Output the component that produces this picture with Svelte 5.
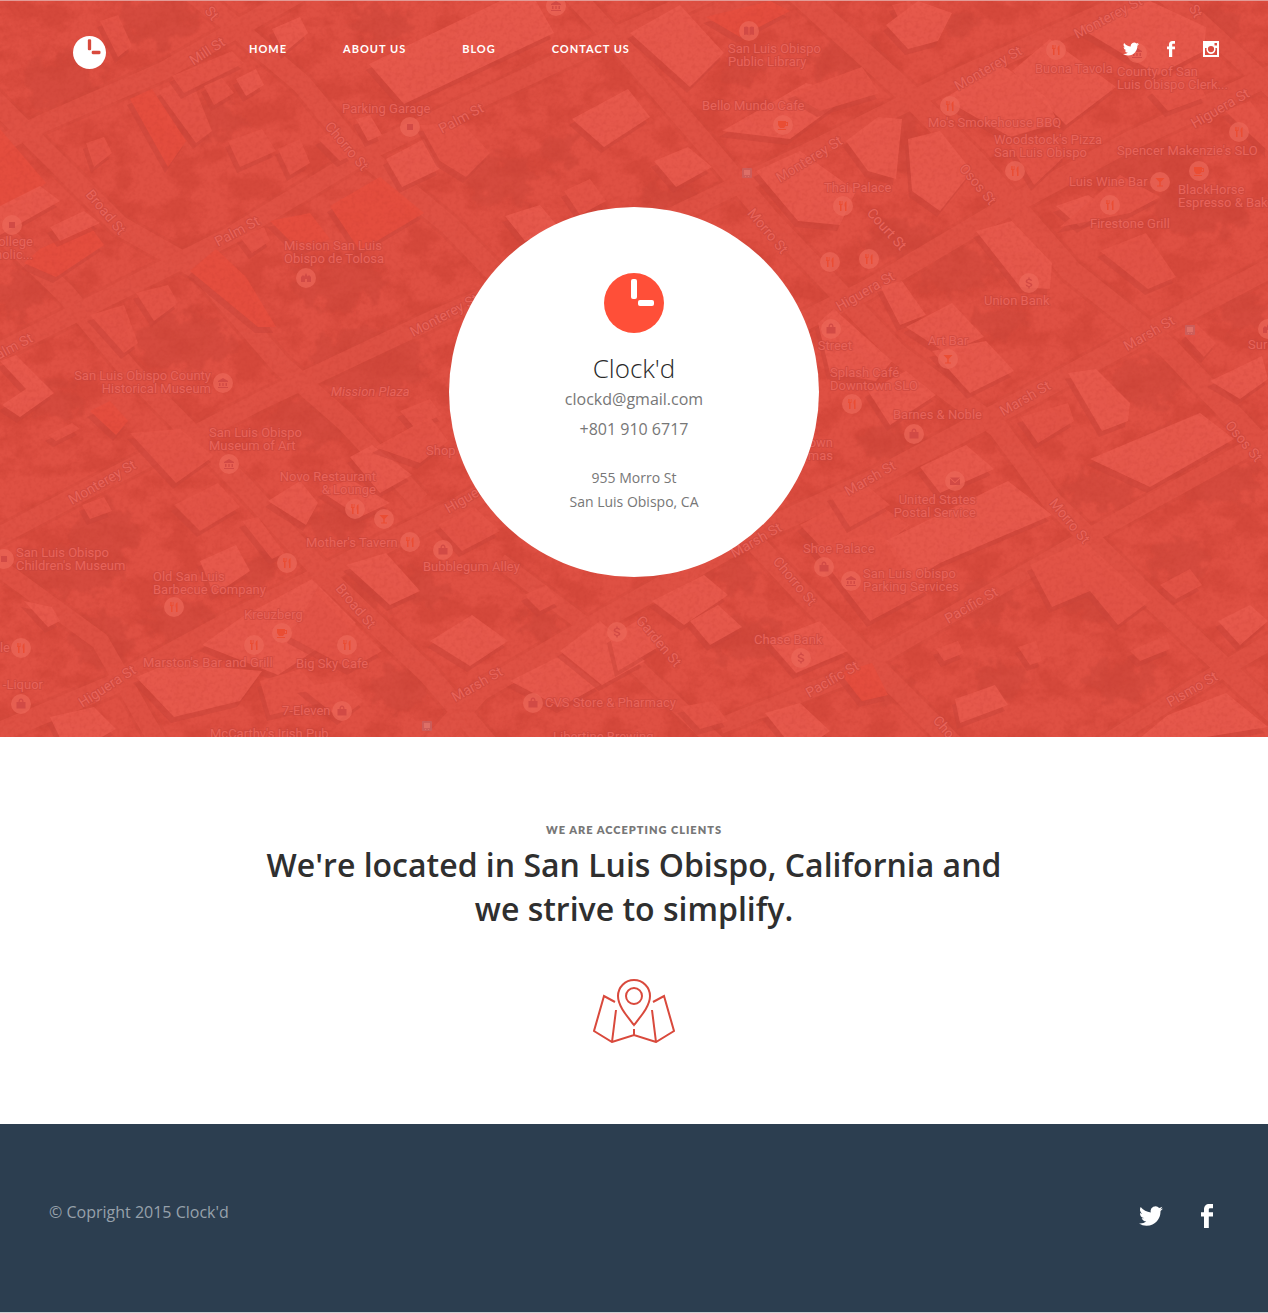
<script>
  const nav = ['Home', 'About us', 'Blog', 'Contact us'];

  // Streets: [width, points]
  const streets = [
    [20, '-10,95 60,165 120,225 200,270 280,363 345,420 420,500'],
    [20, '-10,220 65,292 130,370 245,487 330,580 428,673 490,745'],
    [20, '190,-10 228,20 302,83 351,143 450,225 600,380 735,520 800,590 955,745'],
    [20, '570,-10 628,53 697,133 771,220 898,353 998,427 1052,500 1150,597 1280,718'],
    [22, '795,-10 905,90 975,160 1016,207 1071,270 1168,347 1238,420 1280,465'],
    [18, '1160,-10 1199,20 1280,95'],
    [18, '-10,560 100,640 160,745'],
    [16, '500,560 620,650 720,745'],
    [18, '-10,148 41,123 163,70 228,33 300,-8'],
    [18, '-10,355 110,295 230,235 375,147 571,55 710,-8'],
    [18, '-10,540 100,482 260,400 440,315 620,240 810,150 960,75 1110,8 1150,-10'],
    [20, '-10,735 110,685 230,620 460,505 660,390 865,290 1000,210 1130,140 1280,70'],
    [20, '430,745 480,690 600,620 760,530 870,480 1030,395 1150,330 1280,262'],
    [16, '720,725 840,678 975,600 1080,540 1280,430'],
    [16, '1100,745 1190,688 1280,635']
  ];

  // Roofs: [tone, points]; tone 0 is the palest, 2 the most saturated
  const roofs = [
    [0, '369,63 500,0 536,0 554,32 404,103'],
    [1, '158,90 190,75 212,130 196,142'], [1, '100,20 118,14 132,45 118,56'],
    [0, '272,28 300,16 308,32 284,52'], [1, '172,75 232,50 244,62 184,92'],
    [0, '236,78 256,68 264,84 246,95'], [2, '130,98 152,88 186,140 168,166'],
    [1, '204,85 222,77 234,92 214,104'], [1, '86,142 104,136 112,152 94,166'],
    [1, '228,140 262,128 276,150 240,166'], [1, '278,148 300,138 310,162 290,174'],
    [0, '356,118 370,114 382,134 368,140'], [1, '318,138 334,130 352,154 340,160'],
    [0, '386,158 424,138 440,168 402,186'], [1, '420,124 462,122 490,152 466,176 440,160'],
    [2, '330,205 380,176 424,212 360,250'], [0, '572,118 628,88 650,116 604,146'],
    [1, '564,190 590,178 606,200 580,214'], [0, '505,215 540,204 560,228 525,240'],
    [2, '0,128 46,182 20,202 0,205'], [0, '0,205 40,185 60,200 0,234'],
    [2, '40,248 90,225 104,244 56,276 24,262'], [0, '50,226 84,210 100,222 60,240'],
    [2, '190,270 216,248 246,276 276,326 258,326'], [2, '270,220 310,212 330,238 300,250'],
    [1, '90,314 124,304 138,342 124,352'], [1, '136,292 168,284 178,302 154,320'],
    [1, '240,236 264,226 270,240 252,252'], [0, '0,360 16,354 54,392 20,416 2,404 26,388'],
    [2, '90,410 110,400 128,420 116,434'], [1, '48,434 72,422 80,428 56,440'],
    [1, '130,432 180,428 214,455 176,482'], [0, '350,456 372,444 412,474 380,492'],
    [1, '400,410 430,398 442,414 414,426'], [1, '375,446 430,416 448,440 420,462'],
    [1, '82,504 104,496 112,510 90,518'], [1, '174,504 218,482 240,506 200,530'],
    [0, '200,560 236,544 250,570 214,594'], [1, '242,520 258,516 284,552 272,558'],
    [0, '268,500 300,480 318,502 306,524'], [0, '320,490 350,478 390,502 360,516'],
    [1, '438,524 474,506 500,530 462,550'], [0, '346,564 386,552 420,590 390,604'],
    [0, '242,616 312,578 356,622 278,674 202,644'], [1, '318,586 354,622 382,650 350,668 290,636'],
    [0, '136,676 170,662 262,670 240,700 174,716'], [1, '260,680 300,668 330,700 270,714'],
    [0, '50,716 94,706 116,728 100,737 60,737'], [0, '24,600 52,606 60,620 48,626'],
    [0, '430,640 472,614 508,640 470,665'], [1, '524,594 546,584 560,600 540,610'],
    [0, '510,680 562,654 600,684 560,706'], [0, '560,650 600,620 645,660 602,684'],
    [1, '300,686 340,680 364,700 340,718'], [0, '652,600 704,574 728,594 684,624'],
    [0, '690,620 718,604 742,626 710,644'], [0, '610,636 640,618 660,645 618,670'],
    [0, '768,640 820,620 848,650 796,672'], [1, '680,706 712,700 728,720 700,728'],
    [0, '765,712 800,702 830,730 820,737 785,737'], [2, '840,672 872,662 888,694 862,700'],
    [0, '955,698 995,684 1008,704 960,722'], [1, '800,524 860,492 910,524 870,555 820,545'],
    [1, '830,494 866,484 890,504 850,526'], [0, '885,540 1008,480 1052,514 940,562 910,580'],
    [1, '812,545 880,532 930,588 870,620'], [1, '1030,564 1084,540 1150,600 1118,624 1090,590 1052,606'],
    [1, '936,648 958,640 964,652 944,660'], [1, '1018,646 1036,640 1042,660 1030,664'],
    [1, '1130,650 1166,634 1170,648 1140,660'], [0, '1168,714 1226,692 1268,726 1200,737 1140,737'],
    [0, '1218,620 1250,604 1268,620 1240,644'], [1, '1160,584 1190,568 1202,584 1176,598'],
    [1, '892,4 910,0 918,12 900,20'], [0, '630,32 680,4 724,52 690,86'],
    [2, '706,16 770,0 790,10 740,36'], [0, '886,24 918,0 952,12 938,40 908,48'],
    [0, '1078,26 1150,0 1206,26 1204,50 1158,74'], [0, '1012,70 1050,38 1116,86 1066,124'],
    [0, '944,98 1000,62 1046,96 1058,122 1010,136'], [0, '722,130 806,82 850,94 790,138'],
    [1, '790,92 862,66 880,92 820,110'], [0, '846,140 878,116 902,118 896,178 868,170'],
    [0, '908,138 940,130 972,170 940,210 912,190'], [0, '756,170 800,150 856,190 840,224 798,220'],
    [0, '654,160 688,146 712,166 676,186'], [1, '1010,144 1054,136 1066,154 1034,184'],
    [0, '976,230 1012,220 1052,262 1050,288 1020,286'], [1, '1100,250 1146,232 1176,276 1148,288'],
    [0, '1056,205 1088,194 1110,208 1080,226'], [0, '880,285 902,280 926,314 900,324'],
    [0, '906,326 952,302 984,336 946,352'], [0, '932,350 986,340 1014,370 970,392'],
    [0, '818,322 834,308 892,360 876,380 830,372'], [0, '868,390 906,370 936,394 890,424'],
    [0, '1068,372 1096,368 1130,402 1128,420 1102,430'], [1, '1020,416 1068,402 1074,420 1038,442'],
    [0, '1090,458 1128,442 1200,412 1234,438 1150,486'], [0, '1210,380 1262,355 1268,378 1240,398'],
    [0, '920,466 966,444 994,468 940,492'], [1, '1184,334 1196,322 1216,342 1204,356'],
    [1, '1150,90 1190,62 1206,96 1168,110'], [1, '1060,226 1120,174 1160,196 1130,212'],
    [1, '1225,110 1250,100 1268,124 1268,150']
  ];

  // Tree canopy: [cx, cy, rx, ry]
  const trees = [
    [210, 118, 32, 20], [60, 80, 40, 26], [160, 20, 40, 22], [380, 24, 34, 16], [500, 180, 34, 24],
    [340, 280, 46, 26], [370, 360, 60, 34], [180, 340, 50, 28], [20, 290, 28, 22], [310, 420, 46, 22],
    [60, 400, 26, 18], [105, 530, 34, 30], [70, 570, 50, 24], [100, 640, 32, 28], [180, 620, 36, 20],
    [398, 688, 30, 22], [340, 520, 34, 18], [262, 570, 18, 16], [400, 590, 50, 20], [540, 625, 24, 14],
    [735, 570, 26, 18], [745, 640, 34, 22], [890, 690, 24, 16], [985, 600, 30, 22], [1090, 600, 26, 18],
    [1180, 560, 30, 24], [1120, 680, 34, 22], [1000, 680, 24, 20], [880, 590, 34, 16], [905, 140, 16, 36],
    [740, 70, 20, 14], [850, 60, 40, 20], [960, 20, 16, 14], [1150, 170, 60, 28], [1200, 210, 50, 24],
    [1150, 380, 36, 26], [1160, 440, 22, 14], [1000, 320, 26, 18], [890, 440, 34, 16], [960, 370, 20, 14],
    [1220, 480, 44, 22], [1100, 490, 40, 18], [900, 240, 40, 20], [1240, 310, 26, 18], [960, 270, 40, 22],
    [1210, 20, 30, 14], [560, 150, 20, 18], [670, 200, 30, 16], [760, 110, 18, 12]
  ];

  // Place names: [x, y, anchor, lines]
  const places = [
    [728, 52, 'start', ['San Luis Obispo', 'Public Library']],
    [342, 112, 'start', ['Parking Garage']],
    [702, 109, 'start', ['Bello Mundo Cafe']],
    [1035, 72, 'start', ['Buona Tavola']],
    [1117, 75, 'start', ['County of San', 'Luis Obispo Clerk...']],
    [928, 126, 'start', ["Mo's Smokehouse BBQ"]],
    [994, 143, 'start', ["Woodstock's Pizza", 'San Luis Obispo']],
    [1117, 154, 'start', ["Spencer Makenzie's SLO"]],
    [1069, 185, 'start', ['Luis Wine Bar']],
    [1178, 193, 'start', ['BlackHorse', 'Espresso & Bak']],
    [1090, 227, 'start', ['Firestone Grill']],
    [824, 191, 'start', ['Thai Palace']],
    [33, 245, 'end', ['ollege', 'holic...']],
    [284, 249, 'start', ['Mission San Luis', 'Obispo de Tolosa']],
    [211, 379, 'end', ['San Luis Obispo County', 'Historical Museum']],
    [209, 436, 'start', ['San Luis Obispo', 'Museum of Art']],
    [376, 480, 'end', ['Novo Restaurant', '& Lounge']],
    [426, 454, 'start', ['Shop']],
    [984, 304, 'start', ['Union Bank']],
    [928, 344, 'start', ['Art Bar']],
    [852, 349, 'end', ['Street']],
    [1248, 348, 'start', ['Sur']],
    [830, 376, 'start', ['Splash Café', 'Downtown SLO']],
    [893, 418, 'start', ['Barnes & Noble']],
    [833, 446, 'end', ['own', 'mas']],
    [976, 503, 'end', ['United States', 'Postal Service']],
    [803, 552, 'start', ['Shoe Palace']],
    [863, 577, 'start', ['San Luis Obispo', 'Parking Services']],
    [16, 556, 'start', ['San Luis Obispo', "Children's Museum"]],
    [306, 546, 'start', ["Mother's Tavern"]],
    [423, 570, 'start', ['Bubblegum Alley']],
    [153, 580, 'start', ['Old San Luis', 'Barbecue Company']],
    [244, 618, 'start', ['Kreuzberg']],
    [143, 666, 'start', ["Marston's Bar and Grill"]],
    [296, 667, 'start', ['Big Sky Cafe']],
    [43, 688, 'end', ['-Liquor']],
    [10, 651, 'end', ['le']],
    [282, 714, 'start', ['7-Eleven']],
    [210, 737, 'start', ["McCarthy's Irish Pub"]],
    [545, 706, 'start', ['CVS Store & Pharmacy']],
    [553, 740, 'start', ['Libertine Brewing']],
    [754, 643, 'start', ['Chase Bank']]
  ];

  // Street names: [centre x, centre y, angle, name]
  const streetNames = [
    [207, 50, -33, 'Mill St'], [212, 12, 50, 'St'], [347, 145, 50, 'Chorro St'], [461, 117, -28, 'Palm St'],
    [106, 211, 50, 'Broad St'], [237, 230, -28, 'Palm St'], [14, 345, -28, 'alm St'],
    [1108, 16, -28, 'Monterey St'], [988, 67, -30, 'Monterey St'], [809, 158, -32, 'Monterey St'],
    [444, 314, -28, 'Monterey St'], [102, 481, -30, 'Monterey St'], [1220, 107, -30, 'Higuera St'],
    [865, 290, -30, 'Higuera St'], [474, 492, -30, 'Higuera St'], [107, 685, -33, 'Higuera St'],
    [978, 183, 50, 'Osos St'], [1244, 440, 50, 'Osos St'], [1196, 10, 60, 'St'],
    [768, 230, 50, 'Morro St'], [1070, 520, 50, 'Morro St'], [887, 228, 48, 'Court St'],
    [1149, 332, -30, 'Marsh St'], [1025, 397, -30, 'Marsh St'], [870, 477, -30, 'Marsh St'],
    [756, 539, -30, 'Marsh St'], [477, 683, -30, 'Marsh St'], [356, 605, 50, 'Broad St'],
    [795, 580, 50, 'Chorro St'], [659, 640, 50, 'Garden St'], [971, 604, -30, 'Pacific St'],
    [832, 678, -30, 'Pacific St'], [1192, 688, -30, 'Pismo St'], [944, 726, 50, 'Cho']
  ];

  // Pins: [x, y, kind]
  const pins = [
    [410, 126, 'square'], [749, 30, 'book'], [783, 124, 'cup'], [950, 105, 'fork'], [1056, 49, 'fork'],
    [1137, 52, 'bank'], [1239, 131, 'fork'], [1199, 170, 'cup'], [1160, 181, 'wine'], [1110, 204, 'fork'],
    [1015, 170, 'fork'], [843, 205, 'fork'], [830, 261, 'fork'], [869, 258, 'fork'], [306, 277, 'house'],
    [12, 224, 'square'], [223, 382, 'bank'], [229, 463, 'bank'], [355, 508, 'fork'], [384, 518, 'wine'],
    [410, 541, 'fork'], [443, 549, 'bag'], [287, 562, 'fork'], [174, 606, 'fork'], [282, 632, 'cup'],
    [254, 644, 'fork'], [347, 644, 'fork'], [21, 647, 'fork'], [21, 703, 'bag'], [342, 710, 'bag'],
    [533, 702, 'bag'], [617, 631, 'dollar'], [801, 657, 'dollar'], [1029, 282, 'dollar'],
    [831, 328, 'bag'], [948, 358, 'wine'], [852, 403, 'fork'], [914, 433, 'bag'], [955, 480, 'mail'],
    [824, 566, 'bag'], [851, 580, 'bank'], [4, 558, 'square'], [1268, 328, 'house'], [556, 5, 'bank']
  ];
  const stops = [[747, 172], [1190, 329], [427, 725]];

  const glyphs = {
    fork: 'M-4-5v4h1v6h1.500v-6h1v-4h-.7v3h-.7v-3h-.7v3h-.7v-3zM2-5v10h1.500v-10q-3 2-1.500 6z',
    cup: 'M-5-4H3v1h2v4H2.500L1 3h-4l-2-3zM3-2v2h1v-2zM-5 4h8v1h-8z',
    wine: 'M-4.500-4h9L.7 0v3.500H3v1h-6v-1h2.300V0z',
    bag: 'M-4.500-2h2q0-3.500 2.500-3.500T2.500-2h2v6.500h-9zM-1.300-2h2.600q0-2.200-1.300-2.200T-1.300-2z',
    square: 'M-3-3h6v6h-6z',
    book: 'M-5-4q3-1 4.500.5v8Q-2 3-5 4zM5-4q-3-1-4.500.5v8Q2 3 5 4z',
    bank: 'M-5-2L0-5l5 3v1H-5zM-4 0h1.500v3H-4zM-.7 0H.7v3H-.7zM2.500 0H4v3H2.500zM-5 4H5v1H-5z',
    house: 'M-5 4v-5l2-2 1.300 1.500L0-5l1.700 3.500L3-3l2 2v5H1V1h-2v3z',
    mail: 'M-5-3.500H5L0 1zM-5-2.300L0 2.200 5-2.300V4H-5z',
    dollar: 'M-.7-5.500H.7v1.300q2.200.3 2.600 2H1.700Q1.200-3 0-3-1.800-3-1.800-1.800-1.800-.9.200-.5 3.400.2 3.400 2.100 3.400 3.700.7 4.100v1.400H-.7V4.100Q-3.200 3.700-3.400 1.700h1.600Q-1.500 2.900 0 2.900q1.700 0 1.700-.9 0-.8-2-1.200-3.100-.6-3.100-2.500 0-1.900 2.700-2.400z'
  };
  const warm = ['fork', 'cup', 'wine'];
</script>

{#snippet clock()}
  <svg class="clock" viewBox="0 0 60 60" role="img" aria-label="Clock'd">
    <circle cx="30" cy="30" r="30" />
    <rect x="27" y="6" width="6" height="20" rx="2" />
    <rect x="34" y="27" width="16" height="6" rx="2" />
  </svg>
{/snippet}

{#snippet twitter()}
  <svg class="icon" viewBox="0 0 24 24" aria-hidden="true">
    <path d="M24 4.600a10 10 0 0 1-2.800.8 5 5 0 0 0 2.100-2.700 10 10 0 0 1-3.100 1.200 4.900 4.900 0 0 0-8.400 4.500A14 14 0 0 1 1.700 3.100a4.900 4.900 0 0 0 1.500 6.600 5 5 0 0 1-2.200-.6v.1a4.900 4.900 0 0 0 3.900 4.800 5 5 0 0 1-2.200.1 4.900 4.900 0 0 0 4.600 3.400A9.900 9.900 0 0 1 0 19.500 14 14 0 0 0 7.500 21.700c9.100 0 14-7.500 14-14v-.6A10 10 0 0 0 24 4.600z" />
  </svg>
{/snippet}

{#snippet facebook()}
  <svg class="icon" viewBox="0 0 24 24" aria-hidden="true">
    <path d="M9 24V12.500H6V8.300h3V5.500C9 2 11 0 14.200 0H18v4.200h-2.700c-1.200 0-1.500.6-1.500 1.600v2.500H18v4.200h-4.200V24z" />
  </svg>
{/snippet}

<div class="page">
  <div class="hero">
    <svg class="map" viewBox="0 0 1268 736" preserveAspectRatio="xMidYMid slice" aria-hidden="true">
      <defs>
        <filter id="foliage" x="0" y="0" width="100%" height="100%" color-interpolation-filters="sRGB">
          <feTurbulence type="fractalNoise" baseFrequency="0.030 0.040" numOctaves="6" seed="8" />
          <feColorMatrix values="0 0 0 0 0.78  0 0 0 0 0.24  0 0 0 0 0.19  4 0 0 0 -1.700" />
        </filter>
        <filter id="grain" x="0" y="0" width="100%" height="100%" color-interpolation-filters="sRGB">
          <feTurbulence type="fractalNoise" baseFrequency="0.250" numOctaves="2" seed="2" />
          <feColorMatrix values="0 0 0 0 0.75  0 0 0 0 0.22  0 0 0 0 0.18  3 0 0 0 -1.300" />
        </filter>
        <filter id="ragged" x="-10%" y="-10%" width="120%" height="120%" color-interpolation-filters="sRGB">
          <feTurbulence type="fractalNoise" baseFrequency="0.070" numOctaves="4" seed="3" />
          <feDisplacementMap in="SourceGraphic" scale="40" xChannelSelector="R" yChannelSelector="G" />
          <feGaussianBlur stdDeviation="1" />
        </filter>
      </defs>
      <rect class="ground" width="1268" height="736" />
      <rect width="1268" height="736" filter="url(#foliage)" opacity="0.4" />
      <g class="trees" filter="url(#ragged)">
        {#each trees as [cx, cy, rx, ry]}
          <ellipse {cx} {cy} {rx} {ry} />
        {/each}
      </g>
      <g class="kerbs">
        {#each streets as [width, points]}
          <polyline {points} stroke-width={width + 6} />
        {/each}
      </g>
      <g class="streets">
        {#each streets as [width, points]}
          <polyline {points} stroke-width={width} />
        {/each}
      </g>
      {#each roofs as [tone, points]}
        <polygon class="shade" {points} transform="translate(-3 6)" />
        <polygon class="roof tone{tone}" {points} />
      {/each}
      <rect width="1268" height="736" filter="url(#grain)" opacity="0.16" />
      {#each pins as [x, y, kind]}
        <g transform="translate({x} {y})">
          <circle class="pin" r="10" />
          <path class={warm.includes(kind) ? 'glyph warm' : 'glyph'} d={glyphs[kind]} />
        </g>
      {/each}
      {#each stops as [x, y]}
        <g class="stop" transform="translate({x} {y})">
          <rect x="-5" y="-5" width="10" height="10" rx="1" />
          <path d="M-3-3h6v5h-6zM-2 3h1v1h-1zM1 3h1v1H1z" />
        </g>
      {/each}
      <g class="labels">
        {#each places as [x, y, anchor, lines]}
          {#each lines as line, i}
            <text {x} y={y + i * 13} text-anchor={anchor}>{line}</text>
          {/each}
        {/each}
        <text x="331" y="395" font-style="italic">Mission Plaza</text>
      </g>
      <g class="labels road">
        {#each streetNames as [x, y, angle, name]}
          <text transform="translate({x} {y}) rotate({angle})" text-anchor="middle" dy="5">{name}</text>
        {/each}
      </g>
    </svg>

    <header>
      <a class="logo" href="#home" aria-label="Clock'd home">{@render clock()}</a>
      <nav>
        {#each nav as item}
          <a href="#{item.toLowerCase().replace(' ', '-')}">{item}</a>
        {/each}
      </nav>
      <div class="social">
        <a href="#twitter" aria-label="Twitter">{@render twitter()}</a>
        <a href="#facebook" aria-label="Facebook">{@render facebook()}</a>
        <a href="#instagram" aria-label="Instagram">
          <svg class="icon" viewBox="0 0 16 16" aria-hidden="true">
            <path fill-rule="evenodd" d="M0 0h16v16H0zM2 7v7h12V7h-1.600a4.600 4.600 0 1 1-8.800 0zM11.500 2v2.500H14V2zM8 5a3.100 3.100 0 1 0 0 6.200A3.100 3.100 0 0 0 8 5z" />
          </svg>
        </a>
      </div>
    </header>

    <section class="card">
      {@render clock()}
      <h1>Clock'd</h1>
      <a href="mailto:clockd@gmail.com">clockd@gmail.com</a>
      <a href="tel:+8019106717">+801 910 6717</a>
      <address>955 Morro St<br />San Luis Obispo, CA</address>
    </section>
  </div>

  <main>
    <p>We are accepting clients</p>
    <h2>We're located in San Luis Obispo, California and we strive to simplify.</h2>
    <svg class="place" viewBox="0 0 82 64" aria-hidden="true">
      <path d="M41 46C34 37 25 27 25 17a16 16 0 0 1 32 0c0 10-9 20-16 29z" />
      <circle cx="41" cy="17" r="8" />
      <path d="M22 23l-11-6L1 52l18 11 22-7 22 7 18-11-10-35-11 6M23 31l-4 32M59 31l4 32M41 50v6" />
    </svg>
  </main>

  <footer>
    <span>© Copright 2015 Clock'd</span>
    <div class="social">
      <a href="#twitter" aria-label="Twitter">{@render twitter()}</a>
      <a href="#facebook" aria-label="Facebook">{@render facebook()}</a>
    </div>
  </footer>
</div>

<style>
  :global(body) {
    margin: 0;
    background: #fff;
  }
  .page {
    font-family: 'Open Sans', 'Noto Sans', sans-serif;
    color: #777;
    border-bottom: 1px solid #ccd0d3;
  }
  a {
    color: inherit;
    text-decoration: none;
  }
  svg {
    display: block;
  }
  .hero {
    position: relative;
    overflow: hidden;
    border-top: 1px solid #e39a95;
    padding-bottom: 160px;
    background: #dd4f41;
  }
  .map {
    position: absolute;
    inset: 0;
    width: 100%;
    height: 100%;
  }
  .ground {
    fill: #df5043;
  }
  .trees {
    fill: #cd463a;
    opacity: 0.55;
  }
  .kerbs,
  .streets {
    fill: none;
    stroke-linejoin: round;
  }
  .kerbs {
    stroke: #cf483b;
    opacity: 0.3;
  }
  .streets {
    stroke: #e05245;
    opacity: 0.85;
  }
  .shade {
    fill: #c9443a;
    opacity: 0.5;
  }
  .roof {
    opacity: 0.85;
  }
  .tone0 {
    fill: #e95b4e;
  }
  .tone1 {
    fill: #e45548;
  }
  .tone2 {
    fill: #e64d3e;
  }
  .pin {
    fill: #ed6759;
    opacity: 0.7;
  }
  .glyph {
    fill: #d24a45;
  }
  .warm {
    fill: #ea4d34;
  }
  .stop {
    fill: #c9605f;
    opacity: 0.8;
  }
  .stop path {
    fill: #df7770;
  }
  .labels {
    font-family: Roboto, sans-serif;
    font-size: 13px;
    fill: #e8635a;
    stroke: #c9453c;
    stroke-opacity: 0.6;
    stroke-width: 2px;
    stroke-linejoin: round;
    paint-order: stroke;
  }
  .road {
    font-size: 14px;
  }
  header {
    position: relative;
    display: flex;
    align-items: flex-start;
    padding: 35px 49px 0 73px;
    color: #fff;
  }
  .logo .clock {
    width: 33px;
    height: 33px;
    fill: #fff;
  }
  .logo .clock rect {
    fill: #d84a3d;
  }
  nav {
    display: flex;
    flex-wrap: wrap;
    gap: 8px 56px;
    flex: 1;
    padding: 5px 32px 0 143px;
    font-family: Lato, 'Open Sans', sans-serif;
    font-size: 11px;
    line-height: 16px;
    font-weight: 700;
    letter-spacing: 1px;
    text-transform: uppercase;
  }
  .social {
    display: flex;
    gap: 24px;
    color: #fff;
  }
  header .social {
    padding-top: 5px;
  }
  .icon {
    width: 16px;
    height: 16px;
    fill: currentColor;
  }
  .card {
    position: relative;
    box-sizing: border-box;
    width: 370px;
    height: 370px;
    margin: 138px auto 0;
    padding-top: 66px;
    border-radius: 50%;
    background: #fff;
    display: flex;
    flex-direction: column;
    align-items: center;
    font-size: 16px;
    line-height: 30px;
    text-align: center;
  }
  .card .clock {
    width: 60px;
    height: 60px;
    fill: #ff4f38;
  }
  .card .clock rect {
    fill: #fff;
  }
  h1 {
    margin: 19px 0 0;
    font-size: 26px;
    line-height: 32px;
    font-weight: 300;
    color: #292929;
  }
  address {
    margin-top: 22px;
    font-style: normal;
    font-size: 14px;
    line-height: 24px;
  }
  main {
    display: flex;
    flex-direction: column;
    align-items: center;
    padding: 85px 24px 81px;
    text-align: center;
  }
  p {
    margin: 0;
    font-family: Lato, 'Open Sans', sans-serif;
    font-size: 11px;
    line-height: 16px;
    font-weight: 800;
    letter-spacing: 1px;
    text-transform: uppercase;
  }
  h2 {
    max-width: 780px;
    margin: 5px 0 48px;
    font-size: 32px;
    line-height: 44px;
    font-weight: 600;
    color: #2f2f2f;
  }
  .place {
    width: 82px;
    height: 64px;
    fill: none;
    stroke: #d9493c;
    stroke-width: 2px;
  }
  footer {
    display: flex;
    justify-content: space-between;
    align-items: flex-start;
    padding: 76px 49px 84px;
    background: #2c3e50;
    color: #97a1ab;
    font-size: 16px;
    line-height: 24px;
  }
  footer .social {
    gap: 32px;
    padding-top: 4px;
  }
  footer .icon {
    width: 24px;
    height: 24px;
  }
</style>
